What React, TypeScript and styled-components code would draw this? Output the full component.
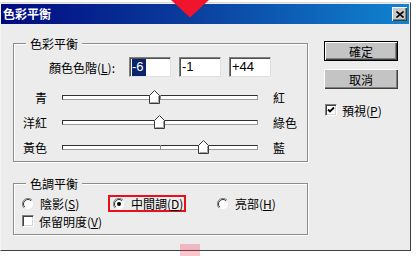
import React from "react";
import styled, { createGlobalStyle } from "styled-components";

const GlobalStyle = createGlobalStyle`
  html, body { margin: 0; padding: 0; background: #fff; }
  body {
    font-family: "Noto Sans CJK TC", "Noto Sans", sans-serif;
    font-size: 12px;
    color: #000;
  }
  #root { width: 418px; height: 256px; overflow: hidden; }
`;

const Stage = styled.div`
  position: relative;
  width: 418px;
  height: 256px;
  padding-top: 2px;
  box-sizing: border-box;
`;

const Window = styled.div`
  width: 411px;
  height: 249px;
  box-sizing: border-box;
  background: #ececec;
  border-top: 1px solid #d8d8d8;
  border-left: 1px solid #f6f6f6;
  border-right: 1px solid #404040;
  border-bottom: 1px solid #404040;
  padding: 1px 1px 0 0;
  display: flex;
  flex-direction: column;
`;

const TitleBar = styled.div`
  height: 20px;
  flex: none;
  display: flex;
  align-items: center;
  justify-content: space-between;
  padding: 0 2px 0 2px;
  background: linear-gradient(90deg, #000a80 0%, #0a3c9c 45%, #1084d0 100%);
`;

const TitleText = styled.span`
  color: #fff;
  font-weight: bold;
  font-size: 12px;
  line-height: 14px;
`;

const CloseButton = styled.div`
  width: 15px;
  height: 14px;
  box-sizing: border-box;
  background: #c8c8c8;
  box-shadow: inset 1px 1px 0 #fff, inset -1px -1px 0 #404040,
    inset -2px -2px 0 #808080;
  display: flex;
  align-items: center;
  justify-content: center;
`;

const Body = styled.div`
  flex: 1;
  display: flex;
  padding: 0 0 0 12px;
`;

const LeftCol = styled.div`
  width: 295px;
  display: flex;
  flex-direction: column;
`;

const RightCol = styled.div`
  margin-left: 16px;
  padding-top: 17px;
  display: flex;
  flex-direction: column;
  width: 74px;
`;

const GroupBox = styled.div<{ $top: number }>`
  margin-top: ${(p) => p.$top}px;
  box-sizing: border-box;
  width: 295px;
  border: 1px solid #8c8c8c;
  box-shadow: inset 1px 1px 0 #fff, 1px 1px 0 #fff;
  padding: 0 0 ${(p) => (p.$top > 20 ? 5 : 1)}px 0;
`;

const Caption = styled.span`
  display: block;
  width: fit-content;
  margin: -8px 0 0 12px;
  padding: 0 4px;
  height: 15px;
  line-height: 15px;
  background: #ececec;
`;

const LevelRow = styled.div`
  display: flex;
  align-items: center;
  height: 20px;
  margin-top: 6px;
`;

const LevelLabel = styled.span`
  width: 101px;
  text-align: right;
  margin-right: 14px;
  line-height: 15px;
`;

const Inputs = styled.div`
  display: flex;
  gap: 8px;
`;

const NumBox = styled.div`
  width: 42px;
  height: 20px;
  box-sizing: border-box;
  background: #fff;
  border: 1px solid;
  border-color: #808080 #e0e0e0 #e0e0e0 #808080;
  box-shadow: inset 1px 1px 0 #505050;
  padding: 1px 0 0 2px;
  font-family: "Liberation Sans", Arial, sans-serif;
  font-size: 13px;
  line-height: 16px;
  display: flex;
`;

const Selected = styled.span`
  background: #0a246a;
  color: #fff;
  padding: 0 2px 0 0;
`;

const SliderGrid = styled.div`
  margin-top: 8px;
  display: grid;
  grid-template-columns: 33px 196px auto;
  grid-auto-rows: 25px;
  column-gap: 15px;
  align-items: center;
`;

const SideLabel = styled.span<{ $align: "left" | "right" }>`
  text-align: ${(p) => p.$align};
  line-height: 15px;
`;

const TrackCell = styled.div`
  position: relative;
  height: 25px;
  display: flex;
  align-items: center;
`;

const Track = styled.div`
  position: relative;
  width: 196px;
  height: 5px;
  box-sizing: border-box;
  background: #fff;
  border: 1px solid;
  border-color: #303030 #9a9a9a #9a9a9a #303030;
`;

const CenterTick = styled.div`
  position: absolute;
  left: 97px;
  top: -1px;
  width: 1px;
  height: 5px;
  background: #8a8a8a;
`;

const Thumb = styled.svg`
  position: absolute;
  top: 5px;
`;

const Button = styled.div<{ $default?: boolean }>`
  width: 74px;
  height: 20px;
  box-sizing: border-box;
  background: #c4c4c4;
  border: ${(p) => (p.$default ? "1px solid #000" : "none")};
  box-shadow: inset 1px 1px 0 #fff, inset -1px -1px 0 #404040,
    inset -2px -2px 0 #808080;
  display: flex;
  align-items: center;
  justify-content: center;
  line-height: 15px;
  & + & {
    margin-top: 8px;
  }
`;

const CheckRow = styled.div<{ $top: number; $left: number }>`
  display: flex;
  align-items: center;
  gap: 5px;
  height: ${(p) => (p.$top > 10 ? 14 : 16)}px;
  margin-top: ${(p) => p.$top}px;
  padding-left: ${(p) => p.$left}px;
  line-height: 15px;
`;

const CheckBox = styled.div`
  width: 12px;
  height: 12px;
  box-sizing: border-box;
  background: #fff;
  border: 1px solid;
  border-color: #808080 #fff #fff #808080;
  box-shadow: inset 1px 1px 0 #404040, inset -1px -1px 0 #d4d4d4;
  display: flex;
  align-items: center;
  justify-content: center;
`;

const RadioRow = styled.div`
  display: flex;
  align-items: center;
  height: 17px;
  margin-top: 4px;
  padding-left: 8px;
`;

const RadioItem = styled.div<{ $width?: number; $marked?: boolean; $gap?: number }>`
  display: flex;
  align-items: center;
  gap: 6px;
  box-sizing: border-box;
  height: 17px;
  line-height: 15px;
  ${(p) => (p.$width ? `width: ${p.$width}px;` : "")}
  ${(p) => (p.$gap ? `margin-left: ${p.$gap}px;` : "")}
  ${(p) => (p.$marked ? "border: 2px solid #e8101c; padding-left: 3px;" : "")}
`;

const Triangle = styled.svg`
  position: absolute;
  left: 171px;
  top: 0;
`;

const PinkMark = styled.div`
  position: absolute;
  left: 180px;
  top: 244px;
  width: 20px;
  height: 12px;
  background: rgba(240, 50, 80, 0.28);
`;

const Radio = ({ on }: { on?: boolean }) => (
  <svg width="12" height="12" viewBox="0 0 12 12">
    <circle cx="6" cy="6" r="5.5" fill="#fff" />
    <path d="M10 2 A5.5 5.5 0 0 0 2 10" stroke="#808080" strokeWidth="1" fill="none" />
    <path d="M9.2 2.8 A4.5 4.5 0 0 0 2.8 9.2" stroke="#303030" strokeWidth="1" fill="none" />
    <path d="M2 10 A5.5 5.5 0 0 0 10 2" stroke="#e8e8e8" strokeWidth="1" fill="none" />
    {on && <circle cx="6" cy="6" r="2" fill="#000" />}
  </svg>
);

const Check = () => (
  <svg width="8" height="8" viewBox="0 0 8 8">
    <path d="M1 3.5 L3 5.5 L7 1.5" stroke="#000" strokeWidth="1.8" fill="none" />
  </svg>
);

const sliders = [
  { left: "青", right: "紅", value: -6 },
  { left: "洋紅", right: "綠色", value: -1 },
  { left: "黃色", right: "藍", value: 44 },
];

export default function App() {
  return (
    <Stage>
      <GlobalStyle />
      <Window>
        <TitleBar>
          <TitleText>色彩平衡</TitleText>
          <CloseButton>
            <svg width="8" height="7" viewBox="0 0 8 7">
              <path d="M0.5 0.5 L7.5 6.5 M7.5 0.5 L0.5 6.5" stroke="#000" strokeWidth="1.6" />
            </svg>
          </CloseButton>
        </TitleBar>
        <Body>
          <LeftCol>
            <GroupBox $top={19}>
              <Caption>色彩平衡</Caption>
              <LevelRow>
                <LevelLabel>
                  顏色色階(<u>L</u>):
                </LevelLabel>
                <Inputs>
                  <NumBox>
                    <Selected>-6</Selected>
                  </NumBox>
                  <NumBox>-1</NumBox>
                  <NumBox>+44</NumBox>
                </Inputs>
              </LevelRow>
              <SliderGrid>
                {sliders.map((s) => {
                  const center = 98 + (s.value / 100) * 98;
                  return (
                    <React.Fragment key={s.left}>
                      <SideLabel $align="right">{s.left}</SideLabel>
                      <TrackCell>
                        <Track>
                          <CenterTick />
                        </Track>
                        <Thumb
                          width="11"
                          height="14"
                          viewBox="0 0 11 14"
                          style={{ left: `${center - 5.5}px` }}
                        >
                          <polygon
                            points="0.5,13.5 0.5,5.5 5.5,0.5 10.5,5.5 10.5,13.5"
                            fill="#fff"
                            stroke="#3a3a3a"
                            strokeWidth="1"
                          />
                          <polyline
                            points="1.5,12.5 9.5,12.5 9.5,6"
                            fill="none"
                            stroke="#a0a0a0"
                            strokeWidth="1"
                          />
                        </Thumb>
                      </TrackCell>
                      <SideLabel $align="left">{s.right}</SideLabel>
                    </React.Fragment>
                  );
                })}
              </SliderGrid>
            </GroupBox>
            <GroupBox $top={21}>
              <Caption>色調平衡</Caption>
              <RadioRow>
                <RadioItem $width={86}>
                  <Radio />
                  <span>
                    陰影(<u>S</u>)
                  </span>
                </RadioItem>
                <RadioItem $marked $width={78}>
                  <Radio on />
                  <span>
                    中間調(<u>D</u>)
                  </span>
                </RadioItem>
                <RadioItem $gap={31}>
                  <Radio />
                  <span>
                    亮部(<u>H</u>)
                  </span>
                </RadioItem>
              </RadioRow>
              <CheckRow $top={1} $left={8}>
                <CheckBox />
                <span>
                  保留明度(<u>V</u>)
                </span>
              </CheckRow>
            </GroupBox>
          </LeftCol>
          <RightCol>
            <Button $default>確定</Button>
            <Button>取消</Button>
            <CheckRow $top={14} $left={1}>
              <CheckBox>
                <Check />
              </CheckBox>
              <span>
                預視(<u>P</u>)
              </span>
            </CheckRow>
          </RightCol>
        </Body>
      </Window>
      <Triangle width="38" height="18" viewBox="0 0 38 18">
        <polygon points="0,0 38,0 19,17.5" fill="#f0142c" />
      </Triangle>
      <PinkMark />
    </Stage>
  );
}
